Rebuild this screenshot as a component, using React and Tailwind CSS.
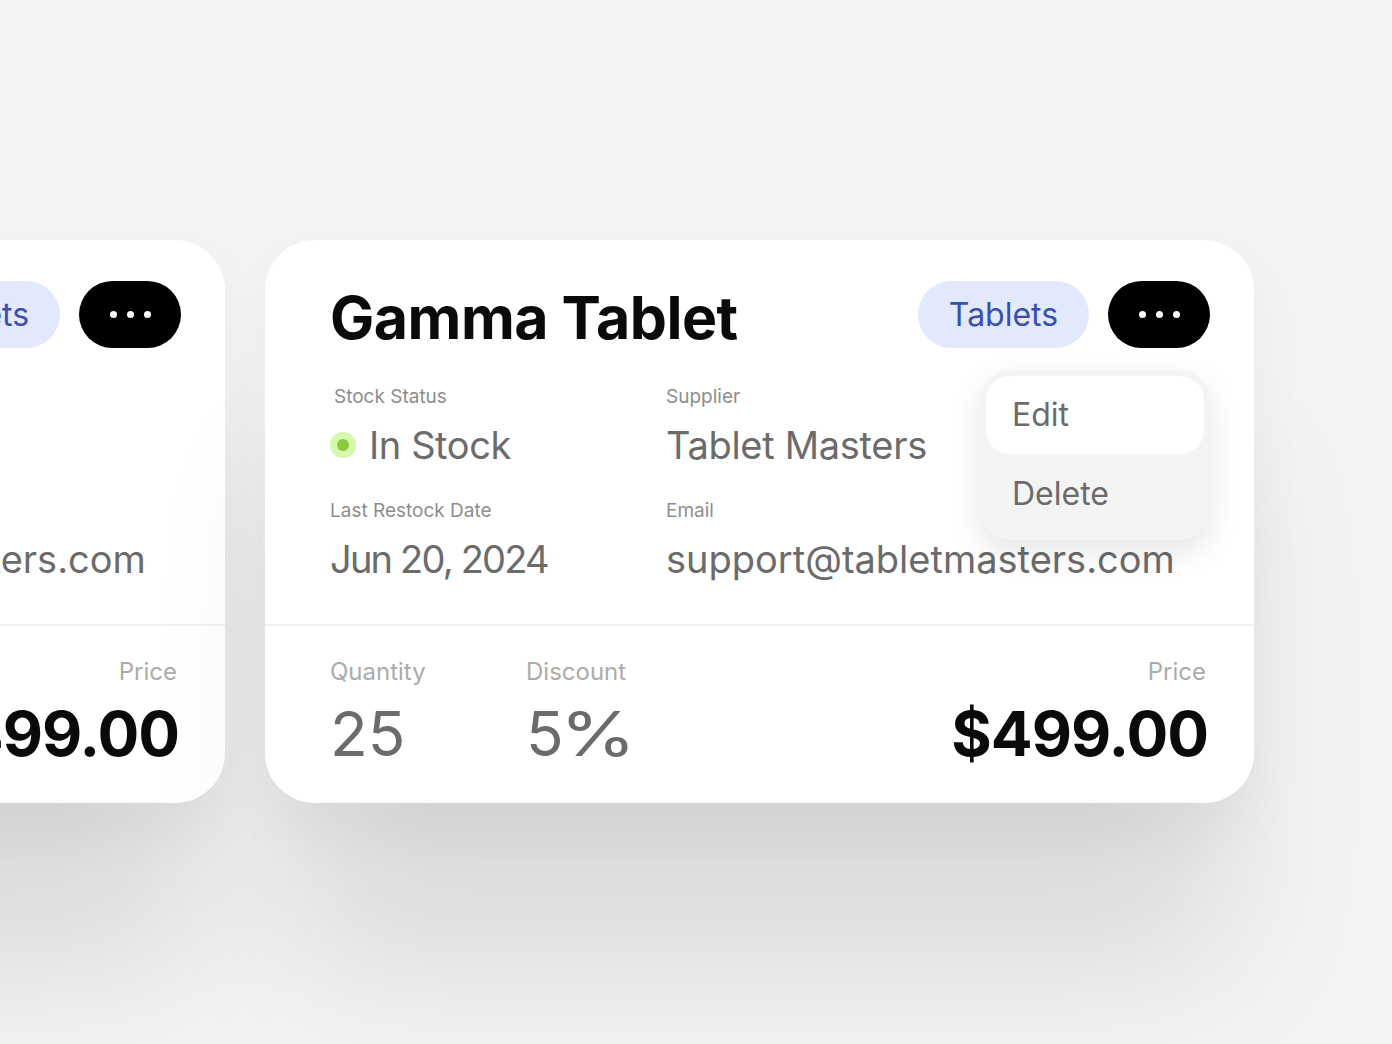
import React from "react";

function Dots() {
  return (
    <div className="flex items-center gap-[10px]">
      <span className="w-[7px] h-[7px] rounded-full bg-white"></span>
      <span className="w-[7px] h-[7px] rounded-full bg-white"></span>
      <span className="w-[7px] h-[7px] rounded-full bg-white"></span>
    </div>
  );
}

function ProductCard({ showMenu }) {
  return (
    <div className="relative w-[989px] h-[563px] shrink-0 bg-white rounded-[50px] shadow-[0_30px_60px_rgba(0,0,0,0.04),0_190px_150px_-30px_rgba(0,0,0,0.1)] flex flex-col">

      {/* top section */}
      <div className="px-[65px] pr-[44px] pt-[41px] pb-[42px] border-b-2 border-[#f1f1f1]">

        <div className="flex items-center justify-between h-[67px]">
          <h1 className="text-[59px] font-bold text-[#0a0a0a] tracking-[-0.5px] leading-none mt-[6px]">
            Gamma Tablet
          </h1>

          <div className="relative flex items-center gap-[19px]">
            <span className="h-[67px] w-[171px] rounded-full bg-[#e3e9fc] text-[#3a4fae] text-[32px] flex items-center justify-center">
              Tablets
            </span>
            <button className="h-[67px] w-[102px] rounded-full bg-black flex items-center justify-center">
              <Dots />
            </button>

            {showMenu && (
              <div className="absolute right-0 top-[89px] w-[230px] p-[6px] rounded-[30px] bg-[#f4f4f4] shadow-[0_12px_30px_rgba(0,0,0,0.1)] z-10">
                <div className="h-[78px] rounded-[24px] bg-white flex items-center pl-[26px] text-[32px] text-[#6b6b6b]">
                  Edit
                </div>
                <div className="h-[80px] flex items-center pl-[26px] text-[32px] text-[#6b6b6b]">
                  Delete
                </div>
              </div>
            )}
          </div>
        </div>

        <div className="grid grid-cols-[336px_1fr] mt-[37px] gap-y-[31px]">
          <div>
            <div className="pl-1 text-[19px] leading-[24px] text-[#8e8e8e]">Stock Status</div>
            <div className="flex items-center gap-[13px] mt-[13px]">
              <span className="w-[26px] h-[26px] rounded-full bg-[#d6f8ac] flex items-center justify-center">
                <span className="w-[12px] h-[12px] rounded-full bg-[#8bc83e]"></span>
              </span>
              <span className="text-[38px] leading-[46px] text-[#6b6b6b] tracking-[-0.4px]">In Stock</span>
            </div>
          </div>
          <div>
            <div className="text-[19px] leading-[24px] text-[#8e8e8e]">Supplier</div>
            <div className="mt-[13px] text-[38px] leading-[46px] text-[#6b6b6b] tracking-[-0.3px]">Tablet Masters</div>
          </div>
          <div>
            <div className="text-[19px] leading-[24px] text-[#8e8e8e]">Last Restock Date</div>
            <div className="mt-[13px] text-[38px] leading-[46px] text-[#6b6b6b] tracking-[-1.8px]">Jun 20, 2024</div>
          </div>
          <div>
            <div className="text-[19px] leading-[24px] text-[#8e8e8e]">Email</div>
            <div className="mt-[13px] text-[38px] leading-[46px] text-[#6b6b6b] whitespace-nowrap">support@tabletmasters.com</div>
          </div>
        </div>
      </div>

      {/* bottom section */}
      <div className="flex-1 flex items-start pl-[65px] pr-[46px] pt-[31px]">
        <div className="w-[196px]">
          <div className="text-[24px] leading-[30px] text-[#ababab]">Quantity</div>
          <div className="mt-[14px] text-[62px] leading-[66px] text-[#6b6b6b]">25</div>
        </div>
        <div>
          <div className="text-[24px] leading-[30px] text-[#ababab]">Discount</div>
          <div className="mt-[14px] text-[62px] leading-[66px] text-[#6b6b6b]">
            <span>5</span>
            <span className="inline-block -ml-[4px] scale-x-[1.25] origin-left">%</span>
          </div>
        </div>
        <div className="ml-auto text-right">
          <div className="pr-[2px] text-[24px] leading-[30px] text-[#ababab]">Price</div>
          <div className="mt-[14px] text-[62px] leading-[66px] font-bold text-[#0a0a0a] tracking-[-1px]">$499.00</div>
        </div>
      </div>

    </div>
  );
}

export default function App() {
  return (
    <div
      className="w-[1392px] h-[1044px] overflow-hidden bg-[#f3f3f3] flex items-start pt-[240px]"
      style={{ fontFamily: "Inter, 'Noto Sans', sans-serif" }}
    >
      <div className="flex gap-[40px] -ml-[764px]">
        <ProductCard showMenu={false} />
        <ProductCard showMenu={true} />
      </div>
    </div>
  );
}
